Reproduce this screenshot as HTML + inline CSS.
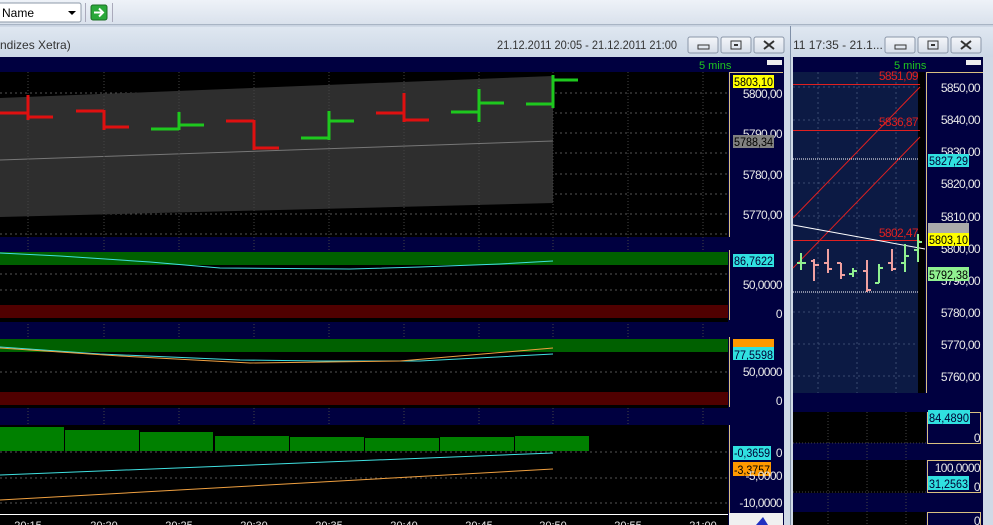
<!DOCTYPE html>
<html><head><meta charset="utf-8"><style>
html,body{margin:0;padding:0;width:993px;height:525px;overflow:hidden;background:#c9d3e1;}
svg{display:block}
text{font-family:"Liberation Sans",sans-serif;}
.ax{letter-spacing:-0.6px}
</style></head><body>
<svg width="993" height="525" xmlns="http://www.w3.org/2000/svg">
<defs>
<linearGradient id="tb" x1="0" y1="0" x2="0" y2="1"><stop offset="0" stop-color="#eef2f8"/><stop offset="1" stop-color="#d9e1ec"/></linearGradient>
<linearGradient id="tt" x1="0" y1="0" x2="0" y2="1"><stop offset="0" stop-color="#dfe7f1"/><stop offset="1" stop-color="#cdd8e6"/></linearGradient>
<linearGradient id="btn" x1="0" y1="0" x2="0" y2="1"><stop offset="0" stop-color="#f4f6fa"/><stop offset="1" stop-color="#d6dde8"/></linearGradient>
</defs>
<rect x="0" y="0" width="993" height="25" fill="url(#tb)"/>
<line x1="0" y1="24.5" x2="993" y2="24.5" stroke="#a8b4c4"/>
<rect x="-3" y="3" width="84" height="19" rx="2" fill="#fff" stroke="#8d99a8"/>
<text x="2" y="17" font-size="12" fill="#000">Name</text>
<path d="M68 11 L76 11 L72 15 Z" fill="#000"/>
<line x1="85.5" y1="3" x2="85.5" y2="22" stroke="#aab"/>
<rect x="91" y="5" width="16" height="15" rx="2" fill="#2aa83a" stroke="#1b6e24"/>
<path d="M94 12.5 H103 M99 8.5 L103 12.5 L99 16.5" stroke="#fff" stroke-width="2" fill="none"/>
<line x1="112.5" y1="3" x2="112.5" y2="22" stroke="#aab"/>

<rect x="0" y="26" width="790" height="499" fill="#cfd9e6"/>
<rect x="0" y="27" width="790" height="30" fill="url(#tt)"/>
<text x="0" y="49" font-size="12" fill="#333">ndizes Xetra)</text>
<text x="677" y="49" font-size="12" fill="#333" text-anchor="end" textLength="180" lengthAdjust="spacingAndGlyphs">21.12.2011 20:05 - 21.12.2011 21:00</text>
<g fill="url(#btn)" stroke="#8a96a8"><rect x="688" y="37" width="30" height="16" rx="2"/><rect x="721" y="37" width="30" height="16" rx="2"/><rect x="754" y="37" width="30" height="16" rx="2"/></g>
<rect x="698" y="45" width="11" height="4" fill="none" stroke="#333"/>
<rect x="731" y="41" width="10" height="8" fill="none" stroke="#333"/><rect x="734" y="44" width="4" height="2" fill="#333"/>
<path d="M764 41 L774 49 M774 41 L764 49" stroke="#333" stroke-width="2"/>

<rect x="0" y="57" width="784" height="468" fill="#000040"/>
<text x="699" y="69" font-size="11" fill="#1ec81e">5 mins</text>
<rect x="767" y="60" width="15" height="5" fill="#eee"/>
<rect x="0" y="72" width="728" height="165" fill="#000"/>
<g stroke="#555" stroke-dasharray="2,3">
<line x1="0" y1="93" x2="728" y2="93"/><line x1="0" y1="113" x2="728" y2="113"/><line x1="0" y1="133" x2="728" y2="133"/><line x1="0" y1="153" x2="728" y2="153"/><line x1="0" y1="174" x2="728" y2="174"/><line x1="0" y1="194" x2="728" y2="194"/><line x1="0" y1="214" x2="728" y2="214"/><line x1="0" y1="234" x2="728" y2="234"/>
</g>
<polygon points="0,98 553,76 553,203 0,217" fill="#2e2e2e"/>
<line x1="0" y1="160" x2="553" y2="141" stroke="#777"/>
<g stroke="#444" stroke-dasharray="1,2">
<line x1="28" y1="72" x2="28" y2="513"/><line x1="104" y1="72" x2="104" y2="513"/><line x1="179" y1="72" x2="179" y2="513"/><line x1="254" y1="72" x2="254" y2="513"/><line x1="329" y1="72" x2="329" y2="513"/><line x1="404" y1="72" x2="404" y2="513"/><line x1="479" y1="72" x2="479" y2="513"/><line x1="553" y1="72" x2="553" y2="513"/><line x1="628" y1="72" x2="628" y2="513"/><line x1="703" y1="72" x2="703" y2="513"/>
</g>
<g stroke-width="3" fill="none">
<path d="M28 95V120 M0 113H28 M28 117H53" stroke="#e01010"/>
<path d="M104 110V130 M76 111H104 M104 127H129" stroke="#e01010"/>
<path d="M179 112V130 M151 129H179 M179 125H204" stroke="#1ec81e"/>
<path d="M254 120V150 M226 121H254 M254 148H279" stroke="#e01010"/>
<path d="M329 111V140 M301 138H329 M329 121H354" stroke="#1ec81e"/>
<path d="M404 93V122 M376 113H404 M404 120H429" stroke="#e01010"/>
<path d="M479 89V122 M451 112H479 M479 103H504" stroke="#1ec81e"/>
<path d="M553 75V108 M526 104H553 M553 80H578" stroke="#1ec81e"/>
</g>
<rect x="729" y="72" width="54" height="165" fill="#000040"/>
<line x1="729.5" y1="72" x2="729.5" y2="237" stroke="#d8c080"/>
<line x1="729" y1="72.5" x2="783" y2="72.5" stroke="#d8c080"/>
<g class="ax" font-size="12" fill="#e8e8e8" text-anchor="end"><text x="782" y="98">5800,00</text><text x="782" y="138">5790,00</text><text x="782" y="179">5780,00</text><text x="782" y="219">5770,00</text></g>
<rect x="733" y="75" width="41" height="13" fill="#ffff00"/><text x="734" y="86" font-size="12" fill="#000" textLength="39" lengthAdjust="spacingAndGlyphs">5803,10</text>
<rect x="733" y="135" width="41" height="13" fill="#808080"/><text x="734" y="146" font-size="12" fill="#000" textLength="39" lengthAdjust="spacingAndGlyphs">5788,34</text>

<rect x="0" y="252" width="728" height="70" fill="#000"/>
<rect x="0" y="252" width="728" height="13" fill="#006000"/>
<rect x="0" y="305" width="728" height="13" fill="#500000"/>
<g stroke="#555" stroke-dasharray="2,3"><line x1="0" y1="274" x2="728" y2="274"/><line x1="0" y1="290" x2="728" y2="290"/></g>
<path d="M0 253 L60 256 L150 262 L220 268 L350 269 L420 267 L500 264 L553 261" stroke="#40e0e0" fill="none"/>
<rect x="729" y="250" width="54" height="72" fill="#000040"/>
<line x1="729.5" y1="250" x2="729.5" y2="320" stroke="#d8c080"/>
<rect x="733" y="254" width="41" height="13" fill="#30e0e0"/><text x="734" y="265" font-size="12" fill="#003" textLength="39" lengthAdjust="spacingAndGlyphs">86,7622</text>
<g class="ax" font-size="12" fill="#e8e8e8" text-anchor="end"><text x="782" y="289">50,0000</text><text x="782" y="318">0</text></g>

<rect x="0" y="339" width="728" height="69" fill="#000"/>
<rect x="0" y="339" width="728" height="13" fill="#006000"/>
<rect x="0" y="392" width="728" height="13" fill="#500000"/>
<g stroke="#555" stroke-dasharray="2,3"><line x1="0" y1="372" x2="728" y2="372"/></g>
<path d="M0 347 L100 354 L240 360 L320 361 L420 361 L553 354" stroke="#40e0e0" fill="none"/>
<path d="M0 348 L120 356 L250 363 L400 361 L553 348" stroke="#f0a040" fill="none"/>
<rect x="729" y="337" width="54" height="70" fill="#000040"/>
<line x1="729.5" y1="337" x2="729.5" y2="407" stroke="#d8c080"/>
<rect x="733" y="339" width="41" height="9" fill="#ff9900"/>
<rect x="733" y="347" width="41" height="13" fill="#30e0e0"/><text x="734" y="359" font-size="12" fill="#003" textLength="39" lengthAdjust="spacingAndGlyphs">77,5598</text>
<g class="ax" font-size="12" fill="#e8e8e8" text-anchor="end"><text x="782" y="376">50,0000</text><text x="782" y="405">0</text></g>

<rect x="0" y="425" width="728" height="88" fill="#000"/>
<g stroke="#555" stroke-dasharray="2,3"><line x1="0" y1="452" x2="728" y2="452"/><line x1="0" y1="478" x2="728" y2="478"/><line x1="0" y1="503" x2="728" y2="503"/></g>
<g fill="#008000"><rect x="0" y="427" width="64" height="24"/><rect x="65" y="430" width="74" height="21"/><rect x="140" y="432" width="73" height="19"/><rect x="215" y="436" width="74" height="15"/><rect x="290" y="437" width="74" height="14"/><rect x="365" y="438" width="74" height="13"/><rect x="440" y="437" width="74" height="14"/><rect x="515" y="436" width="74" height="15"/></g>
<path d="M0 475 L553 453" stroke="#40e0e0" fill="none"/>
<path d="M0 500 L553 469" stroke="#f0a040" fill="none"/>
<rect x="729" y="425" width="54" height="88" fill="#000040"/>
<line x1="729.5" y1="425" x2="729.5" y2="513" stroke="#d8c080"/>
<rect x="733" y="446" width="38" height="14" fill="#30e0e0"/><text x="734" y="457" font-size="12" fill="#003" textLength="36" lengthAdjust="spacingAndGlyphs">-0,3659</text>
<rect x="733" y="462" width="38" height="14" fill="#ff9900"/><text x="734" y="474" font-size="12" fill="#000" textLength="36" lengthAdjust="spacingAndGlyphs">-3,3757</text>
<g class="ax" font-size="12" fill="#e8e8e8" text-anchor="end"><text x="782" y="457">0</text><text x="782" y="480">-5,0000</text><text x="782" y="507">-10,0000</text></g>
<rect x="0" y="513" width="728" height="12" fill="#000"/>
<line x1="0" y1="514.5" x2="728" y2="514.5" stroke="#fff"/>
<g font-size="11" fill="#e8e8e8" text-anchor="middle"><text x="28" y="529">20:15</text><text x="104" y="529">20:20</text><text x="179" y="529">20:25</text><text x="254" y="529">20:30</text><text x="329" y="529">20:35</text><text x="404" y="529">20:40</text><text x="479" y="529">20:45</text><text x="553" y="529">20:50</text><text x="628" y="529">20:55</text><text x="703" y="529">21:00</text></g>
<rect x="729" y="513" width="54" height="12" fill="#f0f0f0"/>
<path d="M756 525 L763 517 L768 525 Z" fill="#2030c0"/>

<rect x="790" y="26" width="203" height="499" fill="#cfd9e6"/>
<line x1="790.5" y1="26" x2="790.5" y2="525" stroke="#8090a8"/>
<rect x="791" y="27" width="202" height="30" fill="url(#tt)"/>
<text x="793" y="49" font-size="12" fill="#333">11 17:35 - 21.1...</text>
<g fill="url(#btn)" stroke="#8a96a8"><rect x="885" y="37" width="30" height="16" rx="2"/><rect x="918" y="37" width="30" height="16" rx="2"/><rect x="951" y="37" width="30" height="16" rx="2"/></g>
<rect x="895" y="45" width="11" height="4" fill="none" stroke="#333"/>
<rect x="928" y="41" width="10" height="8" fill="none" stroke="#333"/><rect x="931" y="44" width="4" height="2" fill="#333"/>
<path d="M961 41 L971 49 M971 41 L961 49" stroke="#333" stroke-width="2"/>
<rect x="793" y="57" width="190" height="468" fill="#000040"/>
<text x="894" y="69" font-size="11" fill="#1ec81e">5 mins</text>
<rect x="966" y="60" width="15" height="5" fill="#eee"/>
<rect x="793" y="72" width="125" height="321" fill="#0c1a44"/>
<rect x="918" y="72" width="7" height="321" fill="#000"/>
<g stroke="#3a4a70" stroke-dasharray="2,3"><line x1="793" y1="87" x2="918" y2="87"/><line x1="793" y1="120" x2="918" y2="120"/><line x1="793" y1="183" x2="918" y2="183"/><line x1="793" y1="216" x2="918" y2="216"/><line x1="793" y1="312" x2="918" y2="312"/><line x1="793" y1="344" x2="918" y2="344"/><line x1="793" y1="376" x2="918" y2="376"/><line x1="818" y1="72" x2="818" y2="393"/><line x1="857" y1="72" x2="857" y2="393"/><line x1="896" y1="72" x2="896" y2="393"/></g>
<line x1="793" y1="84.5" x2="920" y2="84.5" stroke="#e02020"/>
<line x1="793" y1="130.5" x2="920" y2="130.5" stroke="#e02020"/>
<line x1="793" y1="240.5" x2="920" y2="240.5" stroke="#e02020"/>
<line x1="793" y1="218" x2="920" y2="87" stroke="#e02020"/>
<line x1="793" y1="268" x2="920" y2="137" stroke="#e02020"/>
<line x1="793" y1="159" x2="918" y2="159" stroke="#fff" stroke-dasharray="1,1"/>
<line x1="793" y1="292" x2="918" y2="292" stroke="#fff" stroke-dasharray="1,1"/>
<line x1="793" y1="225" x2="925" y2="249" stroke="#fff"/>
<g class="ax" font-size="12" fill="#e02020" text-anchor="end"><text x="918" y="80">5851,09</text><text x="918" y="126">5836,87</text><text x="918" y="237">5802,47</text></g>
<g stroke-width="2" fill="none">
<path d="M801 253V270 M797 263H801 M801 263H806" stroke="#90f090"/>
<path d="M814 259V281 M811 261H814 M814 265H819" stroke="#f0a0a0"/>
<path d="M828 249V273 M824 263H828 M828 269H832" stroke="#f0a0a0"/>
<path d="M841 263V279 M837 263H841 M841 275H845" stroke="#f0a0a0"/>
<path d="M853 268V277 M849 274H853 M853 271H857" stroke="#90f090"/>
<path d="M867 260V292 M863 271H867 M867 290H871" stroke="#f0a0a0"/>
<path d="M879 264V283 M875 283H879 M879 268H883" stroke="#90f090"/>
<path d="M892 249V271 M888 263H892 M892 269H896" stroke="#f0a0a0"/>
<path d="M905 244V272 M901 263H905 M905 256H909" stroke="#90f090"/>
<path d="M918 234V262 M914 250H918 M918 242H922" stroke="#90f090"/>
</g>
<rect x="925" y="72" width="58" height="321" fill="#000040"/>
<line x1="926.5" y1="72" x2="926.5" y2="393" stroke="#d8c080"/>
<line x1="926" y1="72.5" x2="983" y2="72.5" stroke="#d8c080"/>
<g class="ax" font-size="12" fill="#e8e8e8" text-anchor="end"><text x="980" y="92">5850,00</text><text x="980" y="124">5840,00</text><text x="980" y="156">5830,00</text><text x="980" y="188">5820,00</text><text x="980" y="221">5810,00</text><text x="980" y="253">5800,00</text><text x="980" y="285">5790,00</text><text x="980" y="317">5780,00</text><text x="980" y="349">5770,00</text><text x="980" y="381">5760,00</text></g>
<rect x="928" y="154" width="41" height="13" fill="#30e0e0"/><text x="929" y="165" font-size="12" fill="#003" textLength="39" lengthAdjust="spacingAndGlyphs">5827,29</text>
<rect x="928" y="223" width="41" height="10" fill="#aaa"/>
<rect x="928" y="233" width="41" height="13" fill="#ffff00"/><text x="929" y="244" font-size="12" fill="#000" textLength="39" lengthAdjust="spacingAndGlyphs">5803,10</text>
<rect x="928" y="267" width="41" height="14" fill="#90f090"/><text x="929" y="279" font-size="12" fill="#000" textLength="39" lengthAdjust="spacingAndGlyphs">5792,38</text>
<rect x="793" y="412" width="133" height="31" fill="#000"/>
<rect x="793" y="460" width="133" height="33" fill="#000"/>
<rect x="793" y="512" width="133" height="13" fill="#000"/>
<g stroke="#444" stroke-dasharray="1,2"><line x1="828" y1="412" x2="828" y2="525"/><line x1="867" y1="412" x2="867" y2="525"/><line x1="906" y1="412" x2="906" y2="525"/><line x1="793" y1="443" x2="926" y2="443"/><line x1="793" y1="492" x2="926" y2="492"/></g>
<g fill="none" stroke="#d8c080"><rect x="927.5" y="412.5" width="53" height="31"/><rect x="927.5" y="460.5" width="53" height="32"/><rect x="927.5" y="512.5" width="53" height="14"/></g>
<rect x="928" y="410" width="42" height="14" fill="#30e0e0"/><text x="929" y="422" font-size="12" fill="#003" textLength="40" lengthAdjust="spacingAndGlyphs">84,4890</text>
<g class="ax" font-size="12" fill="#e8e8e8" text-anchor="end"><text x="980" y="442">0</text><text x="980" y="472">100,0000</text><text x="980" y="491">0</text><text x="980" y="525">0</text></g>
<rect x="928" y="476" width="41" height="14" fill="#30e0e0"/><text x="929" y="488" font-size="12" fill="#003" textLength="39" lengthAdjust="spacingAndGlyphs">31,2563</text>
<rect x="983" y="57" width="10" height="468" fill="#cfd9e6"/>
</svg>
</body></html>
